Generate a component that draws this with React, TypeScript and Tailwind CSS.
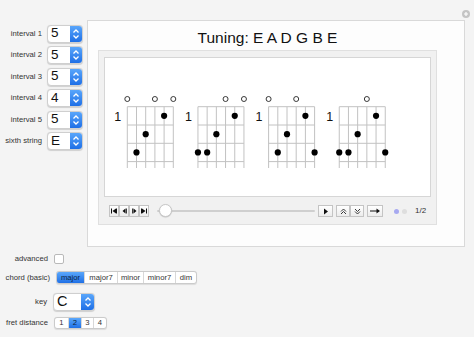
import React from "react";

const labelCls = "text-[7.7px] text-[#333] leading-none text-right";

const Chevrons = () => (
  <svg width="8" height="12" viewBox="0 0 8 12" fill="none" stroke="white" strokeWidth="1.3">
    <path d="M1.5 4.5 L4 2 L6.5 4.5" />
    <path d="M1.5 7.5 L4 10 L6.5 7.5" />
  </svg>
);

const Spinner = ({ value, w = 36, bw = 12, big = false }: { value: string; w?: number; bw?: number; big?: boolean }) => (
  <div
    className="flex h-[18px] rounded-[4px] border border-[#cfcfcf] bg-white shadow-[0_0.5px_1px_rgba(0,0,0,0.15)] overflow-hidden"
    style={{ width: w }}
  >
    <div className={`flex-1 flex items-center pl-[3px] text-[#111] ${big ? "text-[14.5px]" : "text-[13.5px]"}`}>{value}</div>
    <div
      className="flex items-center justify-center bg-gradient-to-b from-[#59a6fb] to-[#1e6fe6]"
      style={{ width: bw }}
    >
      <Chevrons />
    </div>
  </div>
);

const intervals = [
  { label: "interval 1", value: "5" },
  { label: "interval 2", value: "5" },
  { label: "interval 3", value: "5" },
  { label: "interval 4", value: "4" },
  { label: "interval 5", value: "5" },
  { label: "sixth string", value: "E" },
];

interface Chord {
  open: number[];
  dots: [number, number][];
}

const chords: Chord[] = [
  { open: [0, 3, 5], dots: [[4, 1], [2, 2], [1, 3]] },
  { open: [3, 5], dots: [[4, 1], [2, 2], [0, 3], [1, 3]] },
  { open: [0, 3], dots: [[4, 1], [2, 2], [1, 3], [5, 3]] },
  { open: [3], dots: [[4, 1], [2, 2], [0, 3], [1, 3], [5, 3]] },
];

// chord diagrams drawn inside the white frame
const Diagrams = () => {
  const sx = 9.2;
  const fy = 18.3;
  const top = 48.7;
  const bottom = 110;
  return (
    <svg width="327" height="138" viewBox="0 0 327 138">
      {chords.map((c, i) => {
        const x0 = 22.3 + i * 70.65;
        return (
          <g key={i}>
            <text x={x0 - 9.5} y={62.7} fontSize="12.5" textAnchor="middle" fill="#111" fontFamily="Liberation Sans, Arial, sans-serif">
              1
            </text>
            {[0, 1, 2, 3, 4, 5].map((s) => (
              <line key={"v" + s} x1={x0 + s * sx} y1={top} x2={x0 + s * sx} y2={bottom} stroke="#c2c2c2" strokeWidth="1" />
            ))}
            {[0, 1, 2, 3].map((f) => (
              <line key={"h" + f} x1={x0} y1={top + f * fy} x2={x0 + 5 * sx} y2={top + f * fy} stroke="#c2c2c2" strokeWidth="1" />
            ))}
            {c.open.map((s) => (
              <circle key={"o" + s} cx={x0 + s * sx} cy={41} r="2.5" fill="white" stroke="#222" strokeWidth="0.9" />
            ))}
            {c.dots.map(([s, f]) => (
              <circle key={"d" + s + f} cx={x0 + s * sx} cy={top + (f - 0.5) * fy} r="3.1" fill="#000" />
            ))}
          </g>
        );
      })}
    </svg>
  );
};

const SmallBtn = ({ w, children }: { w: number; children: React.ReactNode }) => (
  <div
    className="h-[12px] flex items-center justify-center border border-[#c4c4c4] bg-gradient-to-b from-white to-[#ececec]"
    style={{ width: w }}
  >
    {children}
  </div>
);

const Controls = () => (
  <div className="flex items-center h-[12px] mt-[8px]">
    <div className="flex ml-[5px]">
      <SmallBtn w={10}>
        <svg width="6" height="6" viewBox="0 0 6 6" fill="#111">
          <rect x="0" y="0.5" width="1" height="5" />
          <path d="M5 0.5 L1.5 3 L5 5.5 Z" />
          <rect x="5" y="0.5" width="1" height="5" />
        </svg>
      </SmallBtn>
      <SmallBtn w={10}>
        <svg width="5" height="6" viewBox="0 0 5 6" fill="#111">
          <path d="M3.5 0.5 L0.5 3 L3.5 5.5 Z" />
          <rect x="3.8" y="0.5" width="1" height="5" />
        </svg>
      </SmallBtn>
      <SmallBtn w={10}>
        <svg width="5" height="6" viewBox="0 0 5 6" fill="#111">
          <rect x="0.2" y="0.5" width="1" height="5" />
          <path d="M1.5 0.5 L4.5 3 L1.5 5.5 Z" />
        </svg>
      </SmallBtn>
      <SmallBtn w={10}>
        <svg width="6" height="6" viewBox="0 0 6 6" fill="#111">
          <rect x="0" y="0.5" width="1" height="5" />
          <path d="M1 0.5 L4.5 3 L1 5.5 Z" />
          <rect x="5" y="0.5" width="1" height="5" />
        </svg>
      </SmallBtn>
    </div>
    <div className="relative ml-[8px] w-[158px] h-[12px] flex items-center">
      <div className="w-full h-[2px] bg-[#cfcfcf] rounded-full" />
      <div className="absolute left-[2px] top-[-1px] w-[13px] h-[13px] rounded-full bg-white border border-[#c8c8c8] shadow-[0_0.5px_1px_rgba(0,0,0,0.2)]" />
    </div>
    <div className="ml-[3px]">
      <SmallBtn w={15}>
        <svg width="6" height="7" viewBox="0 0 6 7" fill="#111">
          <path d="M1 0.5 L5 3.5 L1 6.5 Z" />
        </svg>
      </SmallBtn>
    </div>
    <div className="flex ml-[3px]">
      <SmallBtn w={14}>
        <svg width="7" height="7" viewBox="0 0 7 7" fill="none" stroke="#222" strokeWidth="0.9">
          <path d="M1 3.5 L3.5 1 L6 3.5" />
          <path d="M1 6 L3.5 3.5 L6 6" />
        </svg>
      </SmallBtn>
      <SmallBtn w={14}>
        <svg width="7" height="7" viewBox="0 0 7 7" fill="none" stroke="#222" strokeWidth="0.9">
          <path d="M1 1 L3.5 3.5 L6 1" />
          <path d="M1 3.5 L3.5 6 L6 3.5" />
        </svg>
      </SmallBtn>
    </div>
    <div className="ml-[3px]">
      <SmallBtn w={16}>
        <svg width="10" height="6" viewBox="0 0 10 6" fill="#111">
          <rect x="0" y="2.5" width="7" height="1" />
          <path d="M6.5 0.5 L10 3 L6.5 5.5 Z" />
        </svg>
      </SmallBtn>
    </div>
    <div className="ml-[11px] w-[5px] h-[5px] rounded-full bg-[#a7a9f0]" />
    <div className="ml-[3px] w-[5px] h-[5px] rounded-full bg-[#dedede]" />
    <div className="ml-[8px] text-[8px] leading-none text-[#333]">1/2</div>
  </div>
);

const Segmented = ({ items, selected, widths, h }: { items: string[]; selected: number; widths: number[]; h: number }) => (
  <div className="flex rounded-[3px] border border-[#cbcbcb] bg-white overflow-hidden shadow-[0_0.5px_1px_rgba(0,0,0,0.1)]" style={{ height: h }}>
    {items.map((it, i) => (
      <div
        key={it}
        className={`flex items-center justify-center text-[7.7px] leading-none ${i > 0 ? "border-l border-[#d8d8d8]" : ""} ${
          i === selected ? "bg-gradient-to-b from-[#5aa7fb] to-[#1f70e6] text-[#0d2440]" : "text-[#333]"
        }`}
        style={{ width: widths[i] }}
      >
        {it}
      </div>
    ))}
  </div>
);

export default function App() {
  return (
    <div className="w-[474px] h-[337px] bg-[#f4f4f4] relative overflow-hidden font-['Liberation_Sans',Arial,sans-serif]">
      <div className="flex pt-[20px]">
        <div className="w-[87px] pt-[4.5px] flex flex-col gap-[3.5px]">
          {intervals.map((r) => (
            <div key={r.label} className="flex items-center h-[18px]">
              <div className={`${labelCls} w-[42px]`}>{r.label}</div>
              <div className="ml-[5px]">
                <Spinner value={r.value} />
              </div>
            </div>
          ))}
        </div>
        <div className="relative w-[378px] h-[227px] bg-[#fdfdfd] border border-[#d9d9d9]">
          <div className="absolute right-[-6px] top-[-11px] w-[8px] h-[8px] rounded-full bg-[#c4c4c4] flex items-center justify-center">
            <svg width="6" height="6" viewBox="0 0 6 6" stroke="white" strokeWidth="1.2">
              <path d="M3 1 V5 M1 3 H5" />
            </svg>
          </div>
          <div className="ml-[10px] w-[339px]">
            <div className="h-[29px] pt-[8px] text-center text-[15.5px] leading-[18px] text-[#111]">
              Tuning: E A D G B E
            </div>
            <div className="h-[175px] bg-[#f1f1f1] border border-[#e0e0e0] px-[5px] pt-[6px]">
              <div className="w-[327px] h-[140px] bg-white border border-[#d6d6d6]">
                <Diagrams />
              </div>
              <Controls />
            </div>
          </div>
        </div>
      </div>

      <div className="flex flex-col">
        <div className="flex items-center h-[10px] mt-[7px]">
          <div className={`${labelCls} w-[48px]`}>advanced</div>
          <div className="ml-[6px] w-[10px] h-[10px] rounded-[2px] border border-[#b9b9b9] bg-white" />
        </div>
        <div className="flex items-center h-[13px] mt-[7px]">
          <div className={`${labelCls} w-[50px]`}>chord (basic)</div>
          <div className="ml-[6px]">
            <Segmented items={["major", "major7", "minor", "minor7", "dim"]} selected={0} widths={[27, 33, 26, 32, 21]} h={13} />
          </div>
        </div>
        <div className="flex items-center h-[18px] mt-[9px]">
          <div className={`${labelCls} w-[47px]`}>key</div>
          <div className="ml-[6px]">
            <Spinner value="C" w={42} bw={13} big />
          </div>
        </div>
        <div className="flex items-center h-[12px] mt-[6px]">
          <div className={`${labelCls} w-[48px]`}>fret distance</div>
          <div className="ml-[6px]">
            <Segmented items={["1", "2", "3", "4"]} selected={1} widths={[13, 13, 12, 13]} h={12} />
          </div>
        </div>
      </div>
    </div>
  );
}
